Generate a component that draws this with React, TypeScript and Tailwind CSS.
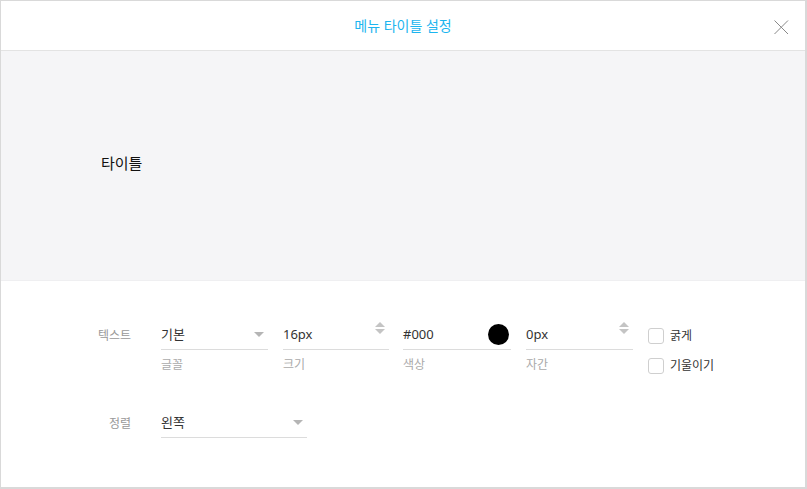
import React from 'react';

const font = { fontFamily: '"Noto Sans", "Noto Sans CJK KR", sans-serif' };

const Caret = () => (
  <svg width="10" height="6" viewBox="0 0 10 6" className="shrink-0">
    <path d="M0 0 L10 0 L5 5 Z" fill="#b5b5b5" />
  </svg>
);

// up/down arrows of the number inputs sit near the top of the row
const Spinner = () => (
  <div className="self-start mt-[2px] flex flex-col items-center gap-[2px] shrink-0">
    <svg width="10" height="5" viewBox="0 0 10 5">
      <path d="M0 5 L10 5 L5 0 Z" fill="#c4c4c4" />
    </svg>
    <svg width="10" height="5" viewBox="0 0 10 5">
      <path d="M0 0 L10 0 L5 5 Z" fill="#c4c4c4" />
    </svg>
  </div>
);

type FieldProps = {
  value: string;
  caption?: string;
  width: string;
  right?: React.ReactNode;
};

const Field = ({ value, caption, width, right }: FieldProps) => (
  <div className={`flex flex-col ${width}`}>
    <div className="h-[30px] flex items-center justify-between border-b border-[#dcdcdc] pr-[4px]">
      <span className="pt-[1px] text-[13px] text-[#333]">{value}</span>
      {right}
    </div>
    {caption && <span className="mt-[6px] text-[12px] leading-[18px] text-[#aaa]">{caption}</span>}
  </div>
);

const Check = ({ label }: { label: string }) => (
  <label className="h-[16px] flex items-center gap-[6px]">
    <span className="w-[16px] h-[16px] rounded-[3px] border border-[#cfcfcf] bg-white" />
    <span className="text-[12px] leading-[16px] text-[#333]">{label}</span>
  </label>
);

export default function App() {
  return (
    <div style={font} className="w-[807px] h-[489px] bg-white border-t border-l border-r-2 border-b-2 border-[#d9d9d9] flex flex-col">
      {/* Header */}
      <div className="h-[50px] shrink-0 border-b border-[#e3e3e3] flex items-center justify-center relative">
        <span className="text-[14px] text-[#1cb5ef]">메뉴 타이틀 설정</span>
        <button className="absolute right-[16px] top-[18px] w-[16px] h-[16px] flex items-center justify-center">
          <svg width="16" height="16" viewBox="0 0 16 16">
            <path d="M1.5 1.5 L15 15 M15 1.5 L1.5 15" stroke="#888" strokeWidth="1" />
          </svg>
        </button>
      </div>

      {/* Preview */}
      <div className="h-[230px] shrink-0 bg-[#f5f5f7] border-b border-[#efeff1] pl-[100px] pt-[100px]">
        <span className="text-[15px] text-[#111]">타이틀</span>
      </div>

      {/* Settings */}
      <div className="flex flex-col pt-[39px] gap-[34px]">
        <div className="flex items-start">
          <div className="w-[130px] h-[30px] pt-[1px] flex items-center justify-end text-[12px] text-[#999]">텍스트</div>
          <div className="ml-[30px] flex items-start">
            <Field value="기본" caption="글꼴" width="w-[107px]" right={<Caret />} />
            <div className="ml-[15px]">
              <Field value="16px" caption="크기" width="w-[106px]" right={<Spinner />} />
            </div>
            <div className="ml-[14px]">
              <Field
                value="#000"
                caption="색상"
                width="w-[108px]"
                right={<span className="w-[21px] h-[21px] rounded-full bg-black -mr-[2px]" />}
              />
            </div>
            <div className="ml-[15px]">
              <Field value="0px" caption="자간" width="w-[107px]" right={<Spinner />} />
            </div>
            <div className="ml-[15px] flex flex-col gap-[14px] pt-[8px]">
              <Check label="굵게" />
              <Check label="기울이기" />
            </div>
          </div>
        </div>

        <div className="flex items-start">
          <div className="w-[130px] h-[30px] pt-[1px] flex items-center justify-end text-[12px] text-[#999]">정렬</div>
          <div className="ml-[30px]">
            <Field value="왼쪽" width="w-[146px]" right={<Caret />} />
          </div>
        </div>
      </div>
    </div>
  );
}
